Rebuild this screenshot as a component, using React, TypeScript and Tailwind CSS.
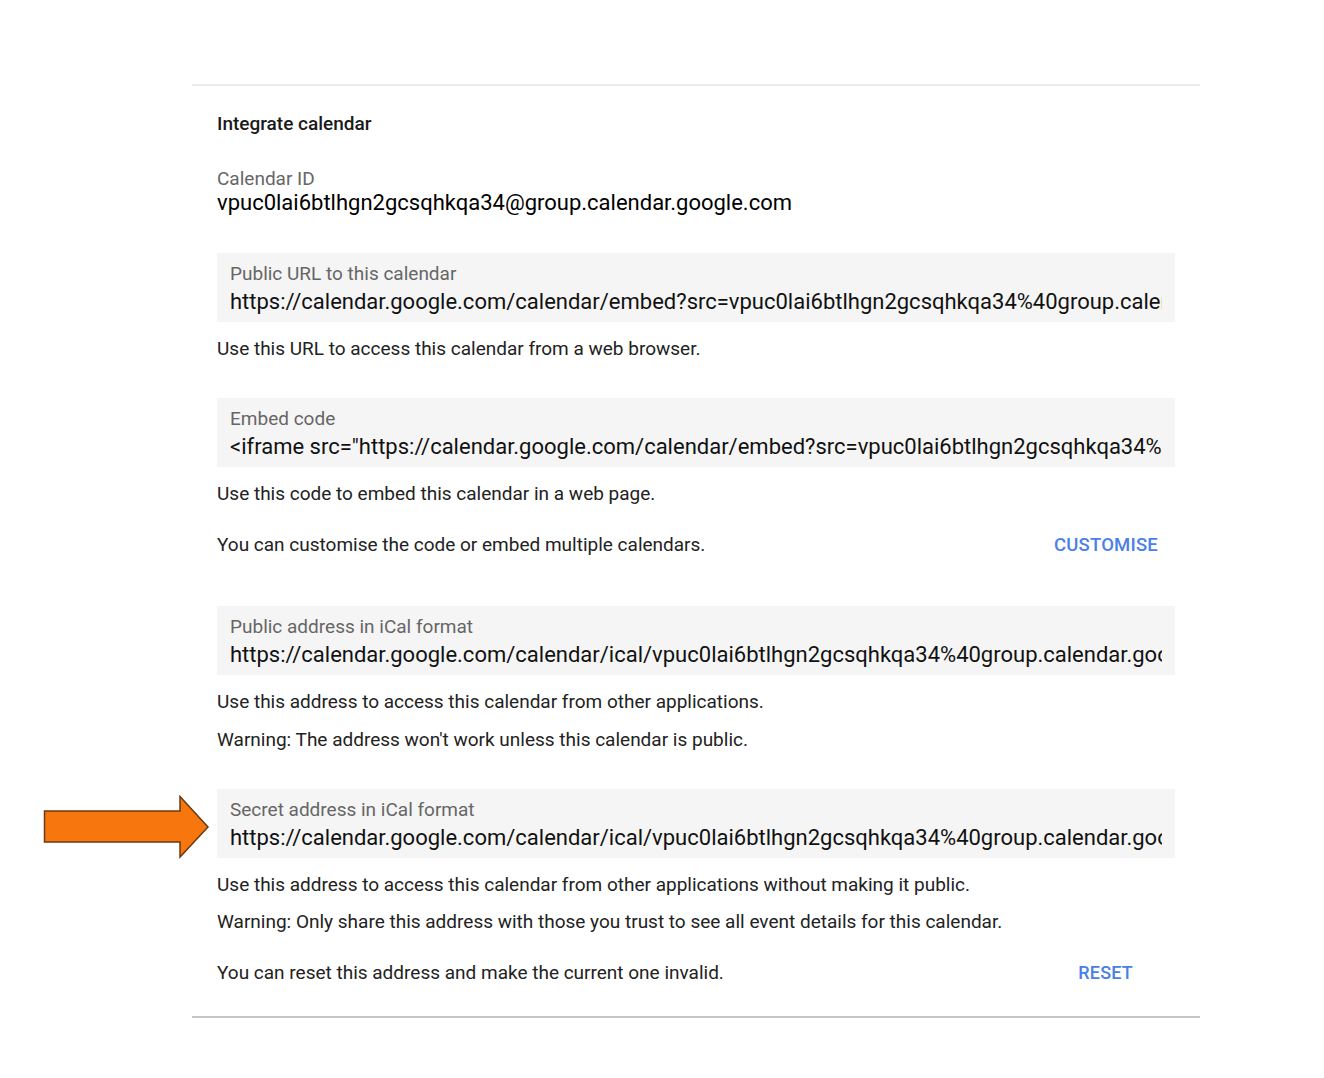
import React from "react";

const fieldBox = "mt-[38px] bg-[#f5f5f5] pl-[13px] pr-[13px] pt-[10px] pb-[6px]";

function Field({ label, value, className = "" }: { label: string; value: string; className?: string }) {
  return (
    <div className={`${fieldBox} ${className}`}>
      <div className="text-[19px] leading-[22px] text-[#666666]">{label}</div>
      <div className="mt-[3px] overflow-hidden whitespace-nowrap text-[22px] leading-[28px] text-[#111111]">
        {value}
      </div>
    </div>
  );
}

function Note({ children, className = "mt-[15px]" }: { children: React.ReactNode; className?: string }) {
  return <p className={`text-[19px] leading-[22px] text-[#222222] ${className}`}>{children}</p>;
}

function Arrow() {
  return (
    <svg
      className="absolute left-[43px] top-[795px]"
      width="168"
      height="64"
      viewBox="0 0 168 64"
    >
      <polygon
        points="1.5,16 137,16 137,1.5 165,32 137,62 137,47 1.5,47"
        fill="#f7760e"
        stroke="#6b3a12"
        strokeWidth="1.5"
        strokeLinejoin="miter"
      />
    </svg>
  );
}

export default function App() {
  const id = "vpuc0lai6btlhgn2gcsqhkqa34";
  return (
    <main className="relative min-h-[1078px] bg-white font-['Roboto','Liberation_Sans',sans-serif]">
      <Arrow />
      <div className="ml-[192px] w-[1008px] pt-[84px]">
        <section className="border-t-2 border-b-2 border-t-[#ececec] border-b-[#c6c6c6] px-[25px] pt-[26px] pb-[32px]">
          <h2 className="text-[19px] leading-[24px] font-medium text-[#1a1a1a]">Integrate calendar</h2>

          <div className="mt-[32px] text-[19px] leading-[22px] text-[#666666]">Calendar ID</div>
          <div className="text-[22px] leading-[26px] text-black">{id}@group.calendar.google.com</div>

          <Field
            className="!mt-[37px]"
            label="Public URL to this calendar"
            value={`https://calendar.google.com/calendar/embed?src=${id}%40group.calendar.google.com&ctz=Europe%2FLondon`}
          />
          <Note className="mt-[16px]">Use this URL to access this calendar from a web browser.</Note>

          <Field
            className="!mt-[38px]"
            label="Embed code"
            value={`<iframe src="https://calendar.google.com/calendar/embed?src=${id}%40group.calendar.google.com&ctz=Europe%2FLondon" style="border: 0" width="800" height="600" frameborder="0" scrolling="no"></iframe>`}
          />
          <Note className="mt-[16px]">Use this code to embed this calendar in a web page.</Note>

          <div className="mt-[29px] flex items-center justify-between">
            <Note className="">You can customise the code or embed multiple calendars.</Note>
            <button className="mr-[17px] text-[18.5px] leading-[22px] font-medium tracking-[0.2px] text-[#4a80e6]">
              CUSTOMISE
            </button>
          </div>

          <Field
            className="!mt-[50px]"
            label="Public address in iCal format"
            value={`https://calendar.google.com/calendar/ical/${id}%40group.calendar.google.com/public/basic.ics`}
          />
          <Note className="mt-[16px]">Use this address to access this calendar from other applications.</Note>
          <Note className="mt-[16px]">Warning: The address won't work unless this calendar is public.</Note>

          <Field
            className="!mt-[38px]"
            label="Secret address in iCal format"
            value={`https://calendar.google.com/calendar/ical/${id}%40group.calendar.google.com/private-3f1c0a9e2b7d4e8f/basic.ics`}
          />
          <Note className="mt-[16px]">Use this address to access this calendar from other applications without making it public.</Note>
          <Note>Warning: Only share this address with those you trust to see all event details for this calendar.</Note>

          <div className="mt-[29px] flex items-center justify-between">
            <Note className="">You can reset this address and make the current one invalid.</Note>
            <button className="mr-[42px] text-[18px] leading-[22px] font-medium tracking-[0.2px] text-[#4a80e6]">
              RESET
            </button>
          </div>
        </section>
      </div>
    </main>
  );
}
